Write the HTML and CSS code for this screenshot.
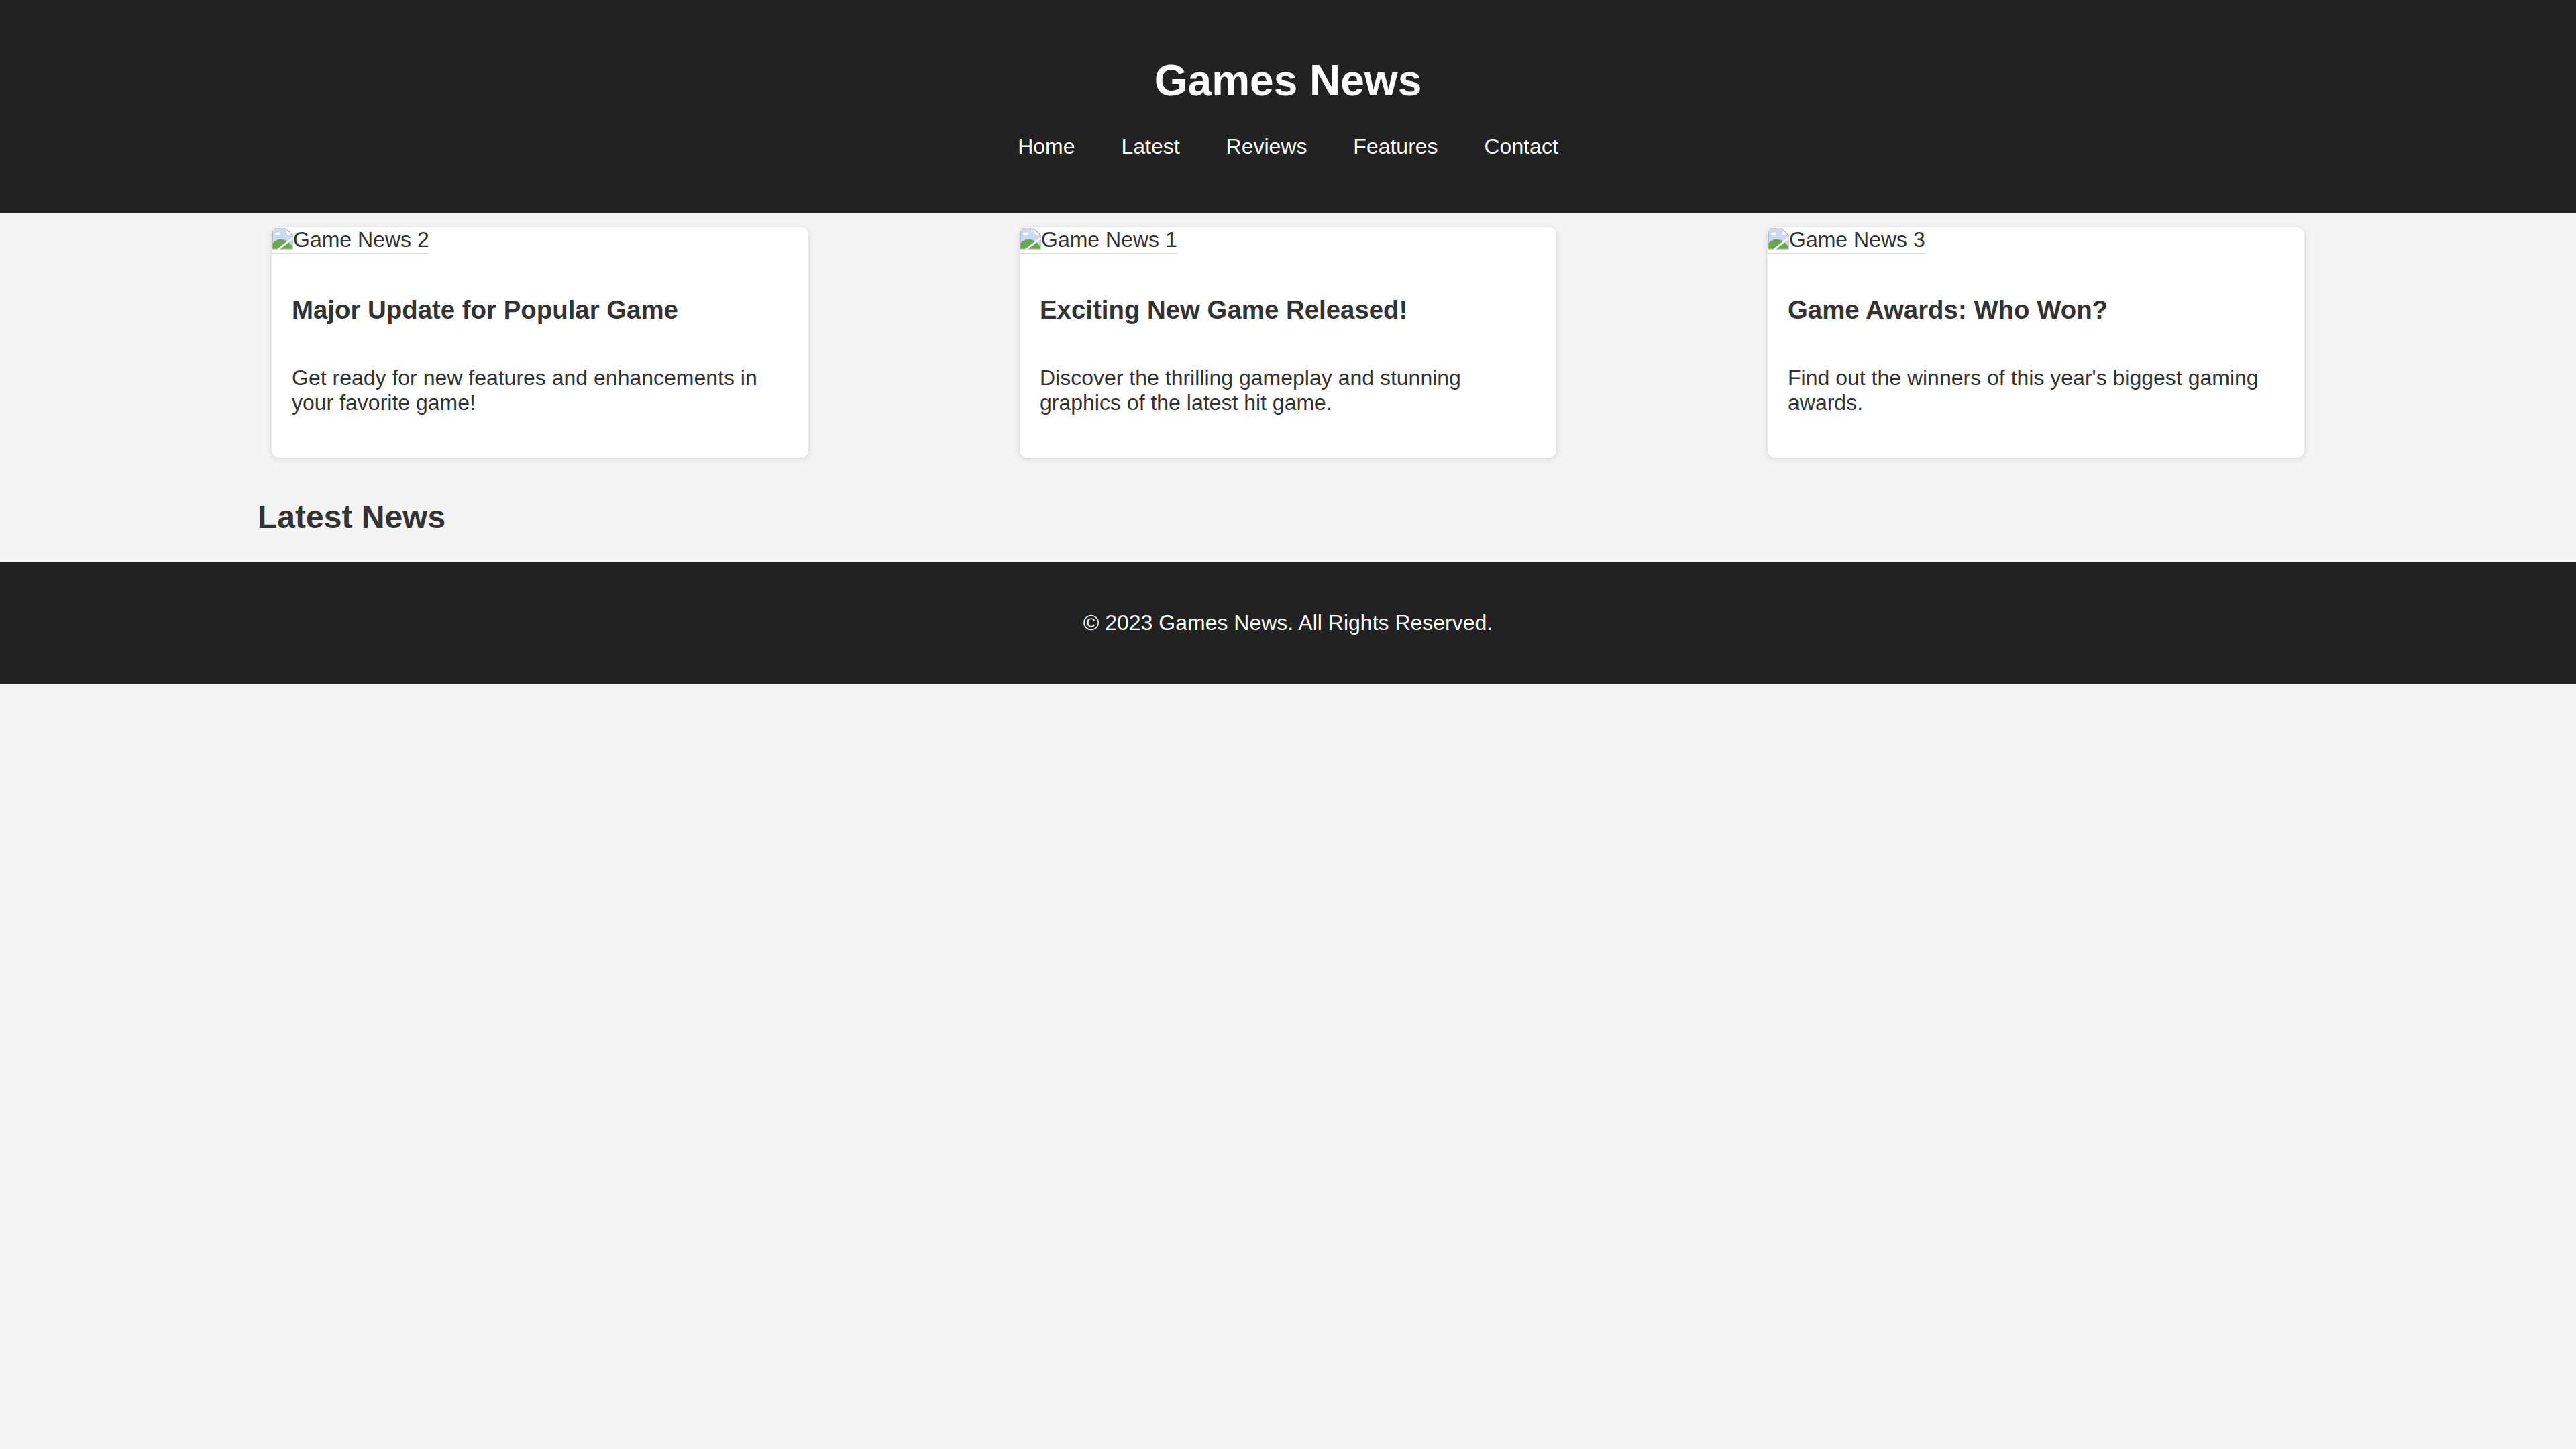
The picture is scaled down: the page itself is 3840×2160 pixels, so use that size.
FILE: index.html
```html
<!DOCTYPE html>
<html lang="en">
<head>
<meta charset="utf-8">
<title>Games News</title>
<link rel="stylesheet" href="styles.css">
</head>
<body>
<header class="site-header">
  <h1 class="site-title">Games News</h1>
  <nav>
    <ul class="nav-list">
      <li><a href="#">Home</a></li>
      <li><a href="#">Latest</a></li>
      <li><a href="#">Reviews</a></li>
      <li><a href="#">Features</a></li>
      <li><a href="#">Contact</a></li>
    </ul>
  </nav>
</header>
<main class="container">
  <section class="featured">
    <article class="card">
      <div class="alt-box">
        <svg class="broken-icon" viewBox="0 0 16 16" width="32" height="32" aria-hidden="true">
          <path d="M0.5 0.5 H10.8 L15.5 5.2 V15.5 H0.5 Z" fill="#c8daf5" stroke="#9a9a9a" stroke-width="0.5"/>
          <ellipse cx="4.6" cy="4.4" rx="1.9" ry="1.1" fill="#ffffff"/>
          <path d="M0.75 15.25 V11.2 Q5 6.6 10.8 9.4 Q13.6 11 15.25 13.2 V15.25 Z" fill="#6aa84a"/>
          <path d="M4.6 16 L15.6 7.6" stroke="#ffffff" stroke-width="1.4"/>
          <path d="M10.8 0.5 V5.2 H15.5 Z" fill="#ffffff" stroke="#9a9a9a" stroke-width="0.5" stroke-linejoin="round"/>
        </svg><span class="alt-text">Game News 2</span>
      </div>
      <div class="card-body">
        <h3 class="card-title">Major Update for Popular Game</h3>
        <p class="card-text">Get ready for new features and enhancements in your favorite game!</p>
      </div>
    </article>
    <article class="card">
      <div class="alt-box">
        <svg class="broken-icon" viewBox="0 0 16 16" width="32" height="32" aria-hidden="true">
          <path d="M0.5 0.5 H10.8 L15.5 5.2 V15.5 H0.5 Z" fill="#c8daf5" stroke="#9a9a9a" stroke-width="0.5"/>
          <ellipse cx="4.6" cy="4.4" rx="1.9" ry="1.1" fill="#ffffff"/>
          <path d="M0.75 15.25 V11.2 Q5 6.6 10.8 9.4 Q13.6 11 15.25 13.2 V15.25 Z" fill="#6aa84a"/>
          <path d="M4.6 16 L15.6 7.6" stroke="#ffffff" stroke-width="1.4"/>
          <path d="M10.8 0.5 V5.2 H15.5 Z" fill="#ffffff" stroke="#9a9a9a" stroke-width="0.5" stroke-linejoin="round"/>
        </svg><span class="alt-text">Game News 1</span>
      </div>
      <div class="card-body">
        <h3 class="card-title">Exciting New Game Released!</h3>
        <p class="card-text">Discover the thrilling gameplay and stunning graphics of the latest hit game.</p>
      </div>
    </article>
    <article class="card">
      <div class="alt-box">
        <svg class="broken-icon" viewBox="0 0 16 16" width="32" height="32" aria-hidden="true">
          <path d="M0.5 0.5 H10.8 L15.5 5.2 V15.5 H0.5 Z" fill="#c8daf5" stroke="#9a9a9a" stroke-width="0.5"/>
          <ellipse cx="4.6" cy="4.4" rx="1.9" ry="1.1" fill="#ffffff"/>
          <path d="M0.75 15.25 V11.2 Q5 6.6 10.8 9.4 Q13.6 11 15.25 13.2 V15.25 Z" fill="#6aa84a"/>
          <path d="M4.6 16 L15.6 7.6" stroke="#ffffff" stroke-width="1.4"/>
          <path d="M10.8 0.5 V5.2 H15.5 Z" fill="#ffffff" stroke="#9a9a9a" stroke-width="0.5" stroke-linejoin="round"/>
        </svg><span class="alt-text">Game News 3</span>
      </div>
      <div class="card-body">
        <h3 class="card-title">Game Awards: Who Won?</h3>
        <p class="card-text">Find out the winners of this year's biggest gaming awards.</p>
      </div>
    </article>
  </section>
  <h2 class="section-title">Latest News</h2>
</main>
<footer class="site-footer">
  <p class="footer-text">&copy; 2023 Games News. All Rights Reserved.</p>
</footer>
</body>
</html>
```
FILE: styles.css
```css
html, body {
  margin: 0;
  padding: 0;
}

body {
  background: #f4f4f4;
  color: #333333;
  font-family: "Liberation Sans", Arial, sans-serif;
  font-size: 32px;
}

.site-header {
  background: #222222;
  color: #ffffff;
  text-align: center;
  padding: 40px 0;
}

.site-title {
  font-size: 64px;
  font-weight: bold;
  margin: 42.88px 0 0;
  line-height: normal;
}

.nav-list {
  list-style: none;
  margin: 42.88px 0 40.9px;
  padding: 0;
  display: flex;
  justify-content: center;
  gap: 8.9px;
}

.nav-list li {
  margin: 0 30px;
}

.nav-list a {
  color: #ffffff;
  text-decoration: none;
}

.container {
  width: 80%;
  margin: 0 auto;
}

.featured {
  display: flex;
  justify-content: space-between;
}

.card {
  width: 800px;
  margin: 21px;
  background: #ffffff;
  border-radius: 10px;
  box-shadow: 0 2px 10px rgba(0, 0, 0, 0.13);
  overflow: hidden;
}

.alt-box {
  display: flex;
  align-items: flex-start;
  width: fit-content;
  height: 38px;
  border-bottom: 2px solid #dedede;
  line-height: normal;
  color: #333333;
}

.broken-icon {
  display: block;
  margin-top: 1px;
  flex: none;
}

.card-body {
  padding: 30px;
}

.card-title {
  font-size: 38.4px;
  font-weight: bold;
  margin: 31px 0 61.5px;
  line-height: normal;
}

.card-text {
  margin: 0 0 33px;
  line-height: normal;
}

.section-title {
  font-size: 48px;
  font-weight: bold;
  margin: 39.84px 0;
  line-height: normal;
}

.site-footer {
  background: #222222;
  color: #ffffff;
  text-align: center;
  padding: 40px 0;
}

.footer-text {
  margin: 32px 0;
  line-height: normal;
}
```
